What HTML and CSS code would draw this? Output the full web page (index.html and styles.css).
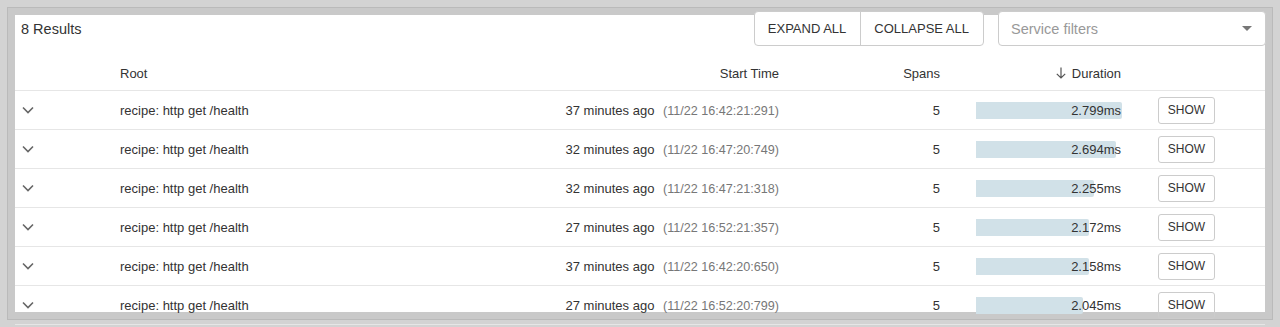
FILE: index.html
```html
<!DOCTYPE html>
<html>
<head>
	<meta charset="utf-8">
	<title>Results</title>
	<link rel="stylesheet" href="styles.css">
</head>
<body>
	<div class="frame">
		<div class="card">
			<div class="toolbar">
				<span class="count">8 Results</span>
				<div class="btnGroup">
					<span class="btn">EXPAND ALL</span>
					<span class="btn">COLLAPSE ALL</span>
				</div>
				<div class="select">
					<span class="placeholder">Service filters</span>
					<span class="caret"></span>
				</div>
			</div>

			<div class="row head">
				<span></span>
				<span>Root</span>
				<span class="num">Start Time</span>
				<span class="num">Spans</span>
				<span class="num sortCol">
					<svg class="arrow" width="10" height="12" viewBox="0 0 10 12"><path d="M5 0.5 V11 M0.8 6.8 L5 11 L9.2 6.8" fill="none" stroke="#555" stroke-width="1.2"/></svg>
					Duration
				</span>
				<span></span>
			</div>

			<div class="row">
				<span class="chev"><svg width="12" height="8" viewBox="0 0 12 8"><path d="M1 1.5 L6 6.5 L11 1.5" fill="none" stroke="#666" stroke-width="1.6"/></svg></span>
				<span>recipe: http get /health</span>
				<span class="num">37 minutes ago <em>(11/22 16:42:21:291)</em></span>
				<span class="num">5</span>
				<span class="dur"><i class="bar" style="width:100%"></i><b>2.799ms</b></span>
				<span class="showCell"><span class="show">SHOW</span></span>
			</div>
			<div class="row">
				<span class="chev"><svg width="12" height="8" viewBox="0 0 12 8"><path d="M1 1.5 L6 6.5 L11 1.5" fill="none" stroke="#666" stroke-width="1.6"/></svg></span>
				<span>recipe: http get /health</span>
				<span class="num">32 minutes ago <em>(11/22 16:47:20:749)</em></span>
				<span class="num">5</span>
				<span class="dur"><i class="bar" style="width:96.2%"></i><b>2.694ms</b></span>
				<span class="showCell"><span class="show">SHOW</span></span>
			</div>
			<div class="row">
				<span class="chev"><svg width="12" height="8" viewBox="0 0 12 8"><path d="M1 1.5 L6 6.5 L11 1.5" fill="none" stroke="#666" stroke-width="1.6"/></svg></span>
				<span>recipe: http get /health</span>
				<span class="num">32 minutes ago <em>(11/22 16:47:21:318)</em></span>
				<span class="num">5</span>
				<span class="dur"><i class="bar" style="width:80.6%"></i><b>2.255ms</b></span>
				<span class="showCell"><span class="show">SHOW</span></span>
			</div>
			<div class="row">
				<span class="chev"><svg width="12" height="8" viewBox="0 0 12 8"><path d="M1 1.5 L6 6.5 L11 1.5" fill="none" stroke="#666" stroke-width="1.6"/></svg></span>
				<span>recipe: http get /health</span>
				<span class="num">27 minutes ago <em>(11/22 16:52:21:357)</em></span>
				<span class="num">5</span>
				<span class="dur"><i class="bar" style="width:77.6%"></i><b>2.172ms</b></span>
				<span class="showCell"><span class="show">SHOW</span></span>
			</div>
			<div class="row">
				<span class="chev"><svg width="12" height="8" viewBox="0 0 12 8"><path d="M1 1.5 L6 6.5 L11 1.5" fill="none" stroke="#666" stroke-width="1.6"/></svg></span>
				<span>recipe: http get /health</span>
				<span class="num">37 minutes ago <em>(11/22 16:42:20:650)</em></span>
				<span class="num">5</span>
				<span class="dur"><i class="bar" style="width:77.1%"></i><b>2.158ms</b></span>
				<span class="showCell"><span class="show">SHOW</span></span>
			</div>
			<div class="row">
				<span class="chev"><svg width="12" height="8" viewBox="0 0 12 8"><path d="M1 1.5 L6 6.5 L11 1.5" fill="none" stroke="#666" stroke-width="1.6"/></svg></span>
				<span>recipe: http get /health</span>
				<span class="num">27 minutes ago <em>(11/22 16:52:20:799)</em></span>
				<span class="num">5</span>
				<span class="dur"><i class="bar" style="width:73.1%"></i><b>2.045ms</b></span>
				<span class="showCell"><span class="show">SHOW</span></span>
			</div>
		</div>
	</div>
</body>
</html>
```

FILE: styles.css
```css
html, body {
	margin: 0;
	padding: 0;
}
body {
	height: 327px;
	overflow: hidden;
	background: #d3d3d3;
	font-family: "Liberation Sans", Arial, sans-serif;
	font-size: 13px;
	color: #333;
}
.frame {
	margin: 7px 7px 0;
	padding: 7px;
	border: 1px solid #bababa;
	background: #c9c9c9;
}
.card {
	display: flow-root;
	height: 297px;
	background: #fff;
}
.toolbar {
	display: flex;
	align-items: center;
	height: 35px;
	margin-top: -4px;
	padding: 0 0 0 6px;
}
.count {
	flex: 1;
	font-size: 14.5px;
	padding-top: 1px;
}
.btnGroup {
	display: flex;
	height: 35px;
	border: 1px solid #ccc;
	border-radius: 4px;
	background: #fff;
	box-sizing: border-box;
}
.btn {
	display: flex;
	align-items: center;
	padding: 0 14px 0 13px;
}
.btn + .btn {
	border-left: 1px solid #ccc;
}
.select {
	display: flex;
	align-items: center;
	justify-content: space-between;
	box-sizing: border-box;
	width: 268px;
	height: 35px;
	margin: 0 -1px 0 14px;
	padding: 0 13px 0 12px;
	border: 1px solid #ccc;
	border-radius: 4px;
	background: #fff;
}
.placeholder {
	color: #999;
	font-size: 14.5px;
}
.caret {
	width: 0;
	height: 0;
	border-left: 5px solid transparent;
	border-right: 5px solid transparent;
	border-top: 5px solid #777;
}
.row {
	display: grid;
	grid-template-columns: 105px 330px 329px 161px 182px 1fr;
	align-items: center;
	height: 38px;
	border-bottom: 1px solid #e6e6e6;
}
.row.head {
	height: 34px;
	padding-top: 10px;
}
.num {
	text-align: right;
}
.sortCol {
	display: flex;
	align-items: center;
	justify-content: flex-end;
	gap: 6px;
	padding-right: 1px;
}
.arrow {
	display: block;
}
.chev {
	display: flex;
	padding-left: 7px;
}
.num em {
	font-style: normal;
	font-size: 12.6px;
	color: #777;
	margin-left: 5px;
}
.dur {
	display: grid;
	align-items: center;
	margin-left: 36px;
	height: 17px;
}
.bar, .dur b {
	grid-area: 1 / 1;
}
.bar {
	display: block;
	height: 17px;
	background: #d1e1e8;
	border-radius: 0 2px 2px 0;
}
.dur b {
	font-weight: normal;
	text-align: right;
	padding-right: 1px;
}
.showCell {
	padding-left: 36px;
}
.show {
	display: inline-flex;
	align-items: center;
	justify-content: center;
	box-sizing: border-box;
	width: 57px;
	height: 27px;
	border: 1px solid #ccc;
	border-radius: 3px;
	font-size: 12px;
	color: #333;
}
```
